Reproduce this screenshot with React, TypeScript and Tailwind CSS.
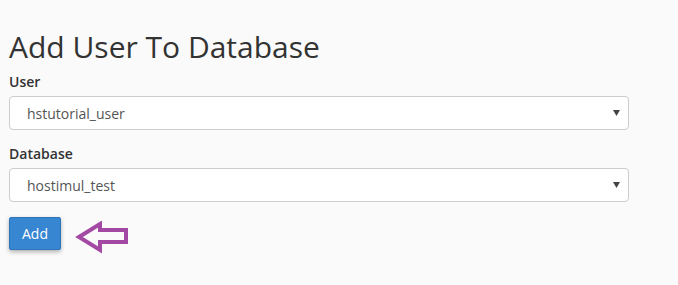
export default function App() {
  return (
    <div
      className="min-h-[285px] bg-[#fafafa] px-[9px] pt-[32px] text-[#333]"
      style={{ fontFamily: '"Open Sans", "Liberation Sans", sans-serif' }}
    >
      <h1 className="text-[30px] font-normal leading-[30px] text-[#333]">Add User To Database</h1>

      <Field label="User" value="hstutorial_user" className="mt-[10px]" />
      <Field label="Database" value="hostimul_test" className="mt-[14px]" />

      <div className="mt-[15px] flex items-start">
        <button className="h-[33px] w-[52px] rounded-[2px] border border-[#2e74b8] bg-[#3686d2] text-[14px] leading-none text-white shadow-[0_2px_4px_rgba(0,0,0,0.3)]">
          Add
        </button>
        {/* hand-drawn pointer */}
        <svg width="56" height="36" viewBox="0 0 56 36" className="ml-[14px] mt-[4px]">
          <polygon
            points="4,16 25,3 25,9 51,9 51,21 25,21 25,29"
            fill="none"
            stroke="#a349a4"
            strokeWidth={4}
            strokeLinejoin="miter"
          />
        </svg>
      </div>
    </div>
  );
}

function Field({ label, value, className }: { label: string; value: string; className?: string }) {
  return (
    <div className={className}>
      <label className="block text-[14px] font-semibold leading-[20px] text-[#333]">{label}</label>
      <div className="mt-[4px] flex h-[34px] w-[620px] items-center justify-between rounded-[4px] border border-[#ccc] bg-white pl-[17px] pr-[8px]">
        <span className="text-[14px] text-[#555]">{value}</span>
        <svg width="7" height="6" viewBox="0 0 7 6">
          <polygon points="0,0 7,0 3.5,6" fill="#444" />
        </svg>
      </div>
    </div>
  );
}
